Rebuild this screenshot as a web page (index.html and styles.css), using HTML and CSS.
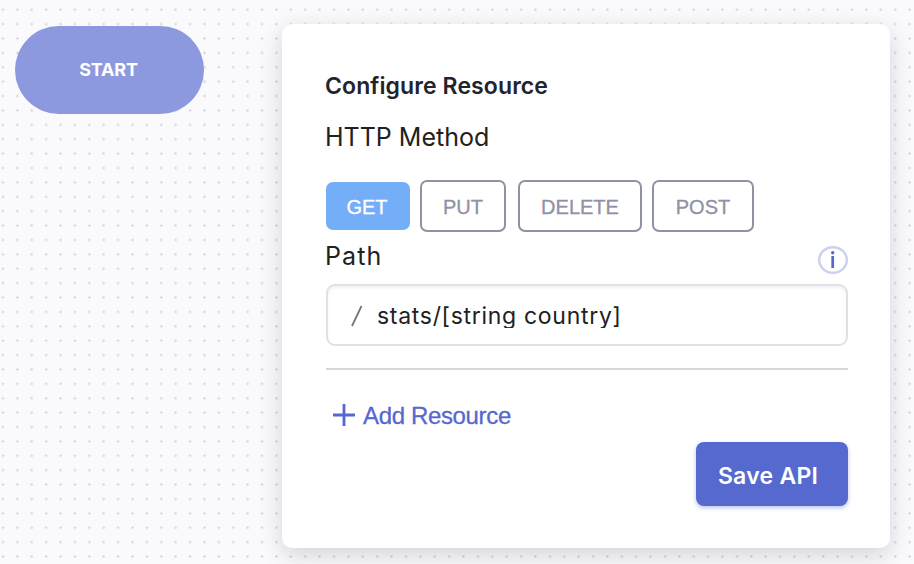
FILE: index.html
```html
<!DOCTYPE html>
<html lang="en">
<head>
<meta charset="utf-8">
<title>Configure Resource</title>
<link rel="stylesheet" href="styles.css">
</head>
<body>
<main class="canvas">
  <div class="start-node"><span>START</span></div>
  <section class="panel">
    <h1 class="title"><span>Configure Resource</span></h1>
    <div class="label label-method"><span>HTTP Method</span></div>
    <div class="methods">
      <button class="method get active">GET</button>
      <button class="method put">PUT</button>
      <button class="method delete">DELETE</button>
      <button class="method post">POST</button>
    </div>
    <div class="path-row">
      <div class="label label-path"><span>Path</span></div>
      <svg class="info" width="32" height="30" viewBox="0 0 32 30">
        <ellipse cx="16" cy="15" rx="13.8" ry="12.8" fill="#fff" stroke="#ccd1f0" stroke-width="2.5"/>
        <circle cx="15.7" cy="7.8" r="1.7" fill="#5567d5"/>
        <path d="M15.7 11v12" stroke="#5567d5" stroke-width="2.7"/>
      </svg>
    </div>
    <div class="field">
      <svg class="slash" width="12" height="22" viewBox="0 0 12 22"><path d="M1 21L10.5 1" fill="none" stroke="#777" stroke-width="1.8"/></svg>
      <div class="value"><span>stats/[string country]</span></div>
    </div>
    <hr class="rule">
    <div class="add">
      <svg width="22" height="22" viewBox="0 0 22 22"><path d="M0 11h22M11 0v22" stroke="#5567d0" stroke-width="2.8"/></svg>
      <span>Add Resource</span>
    </div>
    <button class="save"><span>Save API</span></button>
  </section>
</main>
</body>
</html>
```
FILE: styles.css
```css
* { box-sizing: border-box; }
body { margin: 0; font-family: Inter, "Liberation Sans", sans-serif; color: #212121; }
button { margin: 0; padding: 0; border: 0; white-space: nowrap; }
span { white-space: nowrap; }
.canvas {
  display: flex;
  align-items: flex-start;
  width: 914px;
  height: 564px;
  padding: 24px 24px 0 15px;
  overflow: hidden;
  background-color: #fafafc;
  background-image: radial-gradient(circle at 50% 50%, #d0d0d2 0.7px, rgba(208, 208, 210, 0) 1.5px);
  background-size: 14.4px 14.4px;
  background-position: -4.2px 2.5px;
}
.start-node {
  display: flex;
  align-items: center;
  justify-content: center;
  width: 189px;
  height: 88px;
  margin: 2px 78px 0 0;
  padding: 0 2px 2px 0;
  border-radius: 44px;
  background: #8d99df;
  color: #fff;
  font-size: 18px;
  font-weight: 700;
  letter-spacing: -0.2px;
}
.panel {
  display: flex;
  flex-direction: column;
  width: 608px;
  height: 524px;
  padding: 44px 42px 0 44px;
  border-radius: 10px;
  background: #fff;
  box-shadow: 0 7px 22px rgba(40, 40, 80, 0.19);
}
.title { height: 36px; margin: 0 0 0 -1px; font-size: 23px; line-height: 36px; font-weight: 600; letter-spacing: 0.1px; color: #23232d; }
.label { margin-left: -1px; font-size: 25px; line-height: 36px; height: 36px; }
.label-method { margin-top: 15px; }
.label-path { padding-top: 1px; letter-spacing: 1.1px; }
.methods { display: flex; align-items: center; height: 52px; margin-top: 25px; }
.method {
  height: 52px;
  margin-right: 12px;
  border: 2px solid #8f92a5;
  border-radius: 7px;
  background: #fff;
  color: #8f92a5;
  font: 20px/50px "Liberation Sans", Arial, sans-serif;
  -webkit-text-stroke: 0.3px currentColor;
}
.get { width: 84px; height: 48px; margin-right: 10px; padding-right: 2px; border: 0; background: #74aef9; color: #fff; }
.put { width: 86px; }
.delete { width: 124px; margin-right: 10px; }
.post { width: 102px; margin-right: 0; }
.path-row { display: flex; justify-content: space-between; height: 52px; padding-top: 5px; }
.info { display: block; margin: 8px -1px 0 0; }
.field {
  display: flex;
  align-items: flex-start;
  height: 62px;
  border: 2px solid #e0e0e6;
  border-radius: 9px;
  box-shadow: inset 0 2px 3px rgba(0, 0, 0, 0.06);
}
.slash { margin: 19px 14px 0 23px; }
.value { height: 30px; margin-top: 12px; overflow: hidden; font-size: 23px; line-height: 36px; letter-spacing: 0.7px; }
.rule { width: 100%; height: 2px; margin: 22px 0 0; border: 0; background: #d8d8d9; }
.add { display: flex; align-items: center; gap: 8px; height: 30px; margin: 30px 0 0 7px; color: #5567d0; font: 24px/30px "Liberation Sans", Arial, sans-serif; letter-spacing: -0.35px; -webkit-text-stroke: 0.3px #5567d0; }
.add span { padding-top: 2px; }
.save {
  align-self: flex-end;
  flex: none;
  width: 152px;
  height: 64px;
  margin-top: 12px;
  padding-right: 8px;
  border-radius: 8px;
  background: #5669cf;
  box-shadow: 0 2px 4px rgba(86, 105, 207, 0.4);
  color: #fff;
  font: 600 23px/68px Inter, sans-serif;
  letter-spacing: 0.25px;
}
```
